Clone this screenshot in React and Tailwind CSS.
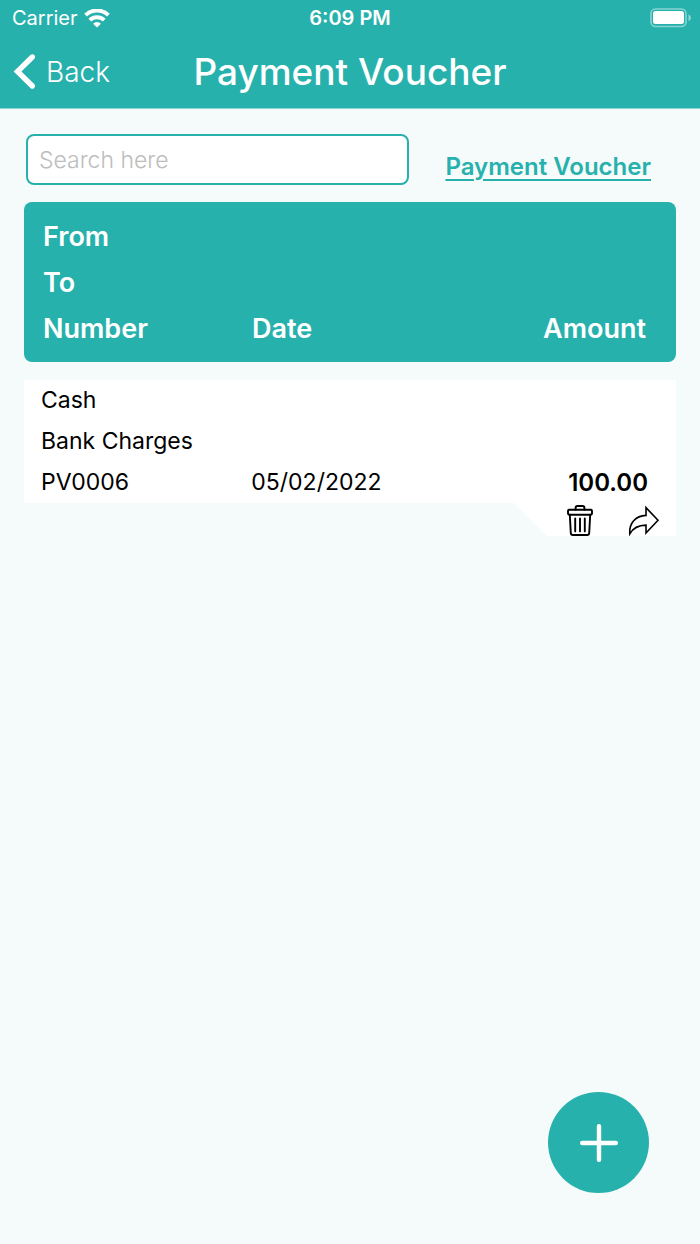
import { useState } from "react";

const vouchers = [
  {
    number: "PV0006",
    from: "Cash",
    to: "Bank Charges",
    date: "05/02/2022",
    amount: "100.00",
  },
];

const StatusBar = () => {
  return (
    <div className="grid grid-cols-3 items-center h-9 px-2">
      <div className="flex items-center gap-1.5 pl-1 text-xl">
        <span>Carrier</span>
        <svg viewBox="0 0 26 19" className="w-[26px] h-[19px]" fill="none" stroke="currentColor" strokeWidth="4">
          <path d="M1.6 6.1a16.4 16.4 0 0 1 22.8 0" />
          <path d="M5.8 11.1a10.4 10.4 0 0 1 14.4 0" />
          <path d="M13 18.6l-3.9-3.9a5.6 5.6 0 0 1 7.8 0z" fill="currentColor" stroke="none" />
        </svg>
      </div>
      <span className="text-center text-xl font-semibold">6:09 PM</span>
      <svg viewBox="0 0 42 20" className="w-[42px] h-5 justify-self-end" fill="none">
        <rect x="1" y="1" width="35" height="17.5" rx="4.5" stroke="white" strokeOpacity="0.45" strokeWidth="1.6" />
        <rect x="3" y="3" width="31" height="13" rx="2.5" fill="white" />
        <path d="M38.5 6.5c1.6.5 2.3 1.7 2.3 3.3s-.7 2.8-2.3 3.3z" fill="white" fillOpacity="0.5" />
      </svg>
    </div>
  );
};

const Header = () => {
  return (
    <header className="bg-[#27b1ad] text-white border-b border-[#8ed3d1]">
      <StatusBar />
      <div className="grid grid-cols-[1fr_auto_1fr] items-center h-[72px] px-3">
        <button type="button" className="flex items-center gap-2 justify-self-start text-[28px] font-light">
          <svg viewBox="0 0 26 38" className="w-[26px] h-[38px]" fill="none" stroke="currentColor" strokeWidth="5.4" strokeLinecap="round" strokeLinejoin="miter">
            <path d="M20.3 4L5.5 18.5l14.8 14.5" />
          </svg>
          Back
        </button>
        <h1 className="text-[37px] font-medium">Payment Voucher</h1>
      </div>
    </header>
  );
};

const TrashIcon = () => {
  return (
    <svg viewBox="0 0 26 31" className="w-[26px] h-[31px]" fill="none" stroke="currentColor" strokeWidth="1.9" strokeLinejoin="round" strokeLinecap="round">
      <path d="M8.6 4.8V2.9Q8.6 1 10.4 1h5.2q1.8 0 1.8 1.9v1.9" />
      <rect x="1" y="4.8" width="24" height="5" rx="1.2" />
      <path d="M2.8 9.8l1 18.2q.1 2 2 2h14.4q1.9 0 2-2l1-18.2" />
      <path d="M8.2 13.4v13M13 13.4v13M17.8 13.4v13" />
    </svg>
  );
};

const ShareIcon = () => {
  return (
    <svg viewBox="0 0 32 31" className="w-8 h-[31px]" fill="none" stroke="currentColor" strokeWidth="1.6">
      <path d="M18 2.6l12 12.7L18 28v-7.9C10.5 20.2 5 23 1.8 28.8 1 18 7.5 10.8 18 10.4z" />
    </svg>
  );
};

const App = () => {
  const [search, setSearch] = useState("");

  const rows = vouchers.filter((v) =>
    Object.values(v).join(" ").toLowerCase().includes(search.toLowerCase())
  );

  return (
    <div className="min-h-screen bg-[#f5fbfb] font-['Inter',sans-serif]">
      <Header />

      <main className="px-6 pt-[25px]">
        {/* Search */}
        <div className="flex items-center justify-between gap-4 pl-0.5 pr-[25px]">
          <input
            type="text"
            aria-label="Search vouchers"
            placeholder="Search here"
            value={search}
            onChange={(e) => setSearch(e.target.value)}
            className="w-[383px] h-[51px] px-[11px] rounded-lg border-2 border-[#27b1ad] bg-white text-[23px] font-light text-black placeholder:text-[#bdbdbd] outline-none"
          />
          <a href="#" className="pt-3.5 text-2xl font-semibold text-[#27b1ad] underline decoration-2 underline-offset-4">
            Payment Voucher
          </a>
        </div>

        {/* Vouchers */}
        <table className="block mt-[17px]">
          <thead className="block rounded-lg bg-[#27b1ad] pl-[19px] pr-[30px] pt-3 pb-2.5 text-left text-[27px] leading-[46px] text-white">
            <tr className="grid grid-cols-3">
              <th className="col-span-3 font-semibold">From</th>
              <th className="col-span-3 font-semibold">To</th>
              <th className="font-semibold">Number</th>
              <th className="font-semibold pl-2">Date</th>
              <th className="font-semibold text-right">Amount</th>
            </tr>
          </thead>
          <tbody className="block mt-[18px]">
            {rows.map((v) => (
              <tr key={v.number} className="block text-[23px] leading-[41px] text-black">
                <td className="block bg-white px-[17px]">{v.from}</td>
                <td className="block bg-white px-[17px]">{v.to}</td>
                <td className="grid grid-cols-3 bg-white pl-[17px] pr-7">
                  <span>{v.number}</span>
                  <span className="pl-2">{v.date}</span>
                  <span className="text-right text-2xl leading-[41px] font-semibold">{v.amount}</span>
                </td>
                <td className="flex items-end gap-[35px] ml-auto w-[162px] h-[33px] pr-4 justify-end bg-white [clip-path:polygon(0_0,100%_0,100%_100%,33px_100%)]">
                  <button type="button" aria-label="Delete">
                    <TrashIcon />
                  </button>
                  <button type="button" aria-label="Share">
                    <ShareIcon />
                  </button>
                </td>
              </tr>
            ))}
          </tbody>
        </table>
      </main>

      <button
        type="button"
        aria-label="Add voucher"
        className="fixed right-[51px] bottom-[51px] flex items-center justify-center w-[101px] h-[101px] rounded-full bg-[#27b1ad] text-white"
      >
        <svg viewBox="0 0 38 38" className="w-[38px] h-[38px]" fill="none" stroke="currentColor" strokeWidth="4.4" strokeLinecap="round">
          <path d="M19 2.2v33.6M2.2 19h33.6" />
        </svg>
      </button>
    </div>
  );
};

export default App;
